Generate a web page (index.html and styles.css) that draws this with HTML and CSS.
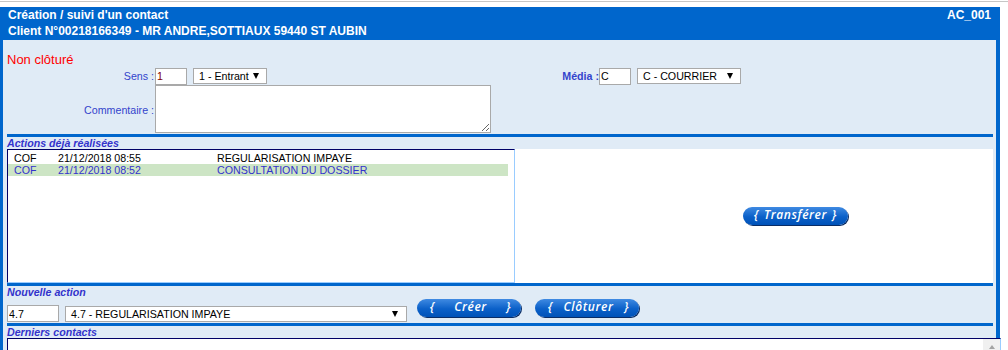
FILE: index.html
```html
<!DOCTYPE html>
<html lang="fr">
<head>
  <meta charset="UTF-8">
  <meta name="viewport" content="width=device-width, initial-scale=1.0">
  <title>Création / suivi d'un contact</title>
  <link rel="stylesheet" href="styles.css">
</head>
<body>
  <div class="rule"></div>
  <div class="page">
    <div class="header">
      <div class="titles">
        <div>Création / suivi d'un contact</div>
        <div>Client N°00218166349 - MR ANDRE,SOTTIAUX 59440 ST AUBIN</div>
      </div>
      <div class="code">AC_001</div>
    </div>

    <div class="frame">
      <div class="status">Non clôturé</div>

      <div class="form">
        <label class="lbl">Sens :</label>
        <div class="field">
          <input class="txt short red" value="1">
          <div class="select sens"><span>1 - Entrant</span><i class="arrow"></i></div>
        </div>
        <label class="lbl bold">Média :</label>
        <div class="field">
          <input class="txt short" value="C">
          <div class="select media"><span>C - COURRIER</span><i class="arrow"></i></div>
        </div>
        <label class="lbl">Commentaire :</label>
        <div class="field"><textarea class="comment"></textarea></div>
      </div>

      <div class="section">
        <div class="section-title">Actions déjà réalisées</div>
        <div class="actions">
          <div class="listbox">
            <div class="row"><span class="c1">COF</span><span class="c2">21/12/2018 08:55</span><span>REGULARISATION IMPAYE</span></div>
            <div class="row selected"><span class="c1">COF</span><span class="c2">21/12/2018 08:52</span><span>CONSULTATION DU DOSSIER</span></div>
          </div>
          <div class="side">
            <button class="btn transfer"><span>{</span><span>Transférer</span><span>}</span></button>
          </div>
        </div>
      </div>

      <div class="section">
        <div class="section-title">Nouvelle action</div>
        <div class="new-row">
          <input class="txt code-input" value="4.7">
          <div class="select action"><span>4.7 - REGULARISATION IMPAYE</span><i class="arrow"></i></div>
          <button class="btn wide create"><span>{</span><span>Créer</span><span>}</span></button>
          <button class="btn wide close"><span>{</span><span>Clôturer</span><span>}</span></button>
        </div>
      </div>

      <div class="section">
        <div class="section-title">Derniers contacts</div>
        <div class="lastbox">
          <div class="last-content"></div>
          <div class="scroll"><i class="up"></i></div>
        </div>
      </div>
    </div>
  </div>
</body>
</html>
```

FILE: styles.css
```css
body {
  margin: 0;
  padding-top: 1px;
  background: #fff;
  font-family: "Liberation Sans", Arial, sans-serif;
}

.rule {
  border-top: 1px solid #c6c6c6;
}

.page {
  width: 1000px;
  margin-top: 5px;
}

.header {
  display: flex;
  justify-content: space-between;
  background: #0066cc;
  color: #fff;
  font-weight: bold;
  font-size: 12px;
  line-height: 16px;
  padding: 0 9px 1px 8px;
}

.frame {
  background: #e0ebf6;
  border-left: 3px solid #0066cc;
  border-right: 4px solid #0066cc;
  padding: 0 3px 0 4px;
}

.status {
  color: #ff0000;
  font-size: 13px;
  line-height: 15px;
  padding-top: 12px;
}

.form {
  display: grid;
  grid-template-columns: 148px 400px 44px 1fr;
  grid-template-rows: 18px 49px;
  align-items: center;
  font-size: 8pt;
}

.lbl {
  color: #3344cc;
  text-align: right;
  padding-right: 1px;
}

.lbl.bold {
  font-weight: bold;
  padding-right: 0;
}

.field {
  display: flex;
  align-items: center;
  gap: 6px;
}

.txt {
  box-sizing: border-box;
  height: 17px;
  margin: 0;
  padding: 0 1px;
  border: 1px solid #a9a9a9;
  font-family: "Liberation Sans", Arial, sans-serif;
  font-size: 8pt;
  color: #000;
  background: #fff;
}

.txt.short {
  width: 32px;
}

.txt.red {
  color: #800000;
}

.select {
  box-sizing: border-box;
  height: 16px;
  display: flex;
  align-items: center;
  justify-content: space-between;
  border: 1px solid #a9a9a9;
  background: #fff;
  padding: 0 7px 0 5px;
  font-size: 8pt;
  color: #000;
}

.select.sens {
  width: 74px;
}

.select.media {
  width: 104px;
}

.arrow {
  width: 0;
  height: 0;
  border-left: 3px solid transparent;
  border-right: 3px solid transparent;
  border-top: 6px solid #000;
}

.comment {
  display: block;
  box-sizing: border-box;
  width: 336px;
  height: 48px;
  margin: 0;
  border: 1px solid #a9a9a9;
  align-self: start;
}

.form .field:last-child {
  align-self: start;
}

.section {
  border-top: 3px solid #0066cc;
}

.section-title {
  color: #3333cc;
  font-size: 8pt;
  font-style: italic;
  font-weight: bold;
  line-height: 12px;
  height: 12px;
}

.actions {
  display: flex;
  height: 134px;
  background: #fff;
}

.listbox {
  box-sizing: border-box;
  width: 508px;
  border-top: 1px solid #000066;
  border-left: 1px solid #000066;
  border-right: 1px solid #99ccff;
  border-bottom: 1px solid #99ccff;
  padding-top: 2px;
  font-size: 8pt;
  line-height: 12px;
}

.row {
  display: flex;
  width: 500px;
  box-sizing: border-box;
  padding-left: 6px;
  color: #000;
}

.row.selected {
  background: #cde5c5;
  color: #3333cc;
}

.c1 {
  width: 44px;
}

.c2 {
  width: 159px;
}

.side {
  flex: 1;
  display: flex;
  align-items: center;
  justify-content: center;
  padding-left: 83px;
}

.btn {
  box-sizing: border-box;
  width: 105px;
  height: 18px;
  margin: 0;
  padding: 0 0 2px;
  border: 0;
  border-radius: 9px;
  background: linear-gradient(#3f8ae2, #0b60c8 55%, #0052b8);
  box-shadow: 1px 1px 0 #0a2d66;
  color: #fff;
  font-family: "Open Sans", sans-serif;
  font-style: italic;
  font-weight: 600;
  font-size: 12px;
  letter-spacing: 0.6px;
  line-height: 16px;
  display: flex;
  align-items: center;
  justify-content: center;
  gap: 5px;
}

.btn.wide {
  justify-content: space-between;
  padding: 0 10px 2px 13px;
  width: 104px;
}

.new-row {
  display: flex;
  align-items: flex-start;
  height: 25px;
}

.code-input {
  width: 52px;
  margin-top: 7px;
}

.select.action {
  width: 342px;
  margin-left: 6px;
  margin-top: 8px;
  padding-right: 8px;
}

.btn.create {
  margin-left: 10px;
  margin-top: 1px;
}

.btn.close {
  margin-left: 14px;
  margin-top: 1px;
}

.lastbox {
  display: flex;
  height: 40px;
  margin-right: -8px;
  background: #fff;
  border-top: 1px solid #000066;
  border-left: 1px solid #000066;
  border-right: 1px solid #99ccff;
}

.last-content {
  flex: 1;
}

.scroll {
  width: 17px;
  background: #f0f0f0;
  display: flex;
  justify-content: center;
}

.up {
  width: 0;
  height: 0;
  margin-top: 6px;
  border-left: 3.5px solid transparent;
  border-right: 3.5px solid transparent;
  border-bottom: 4px solid #a3a3a3;
}
```
